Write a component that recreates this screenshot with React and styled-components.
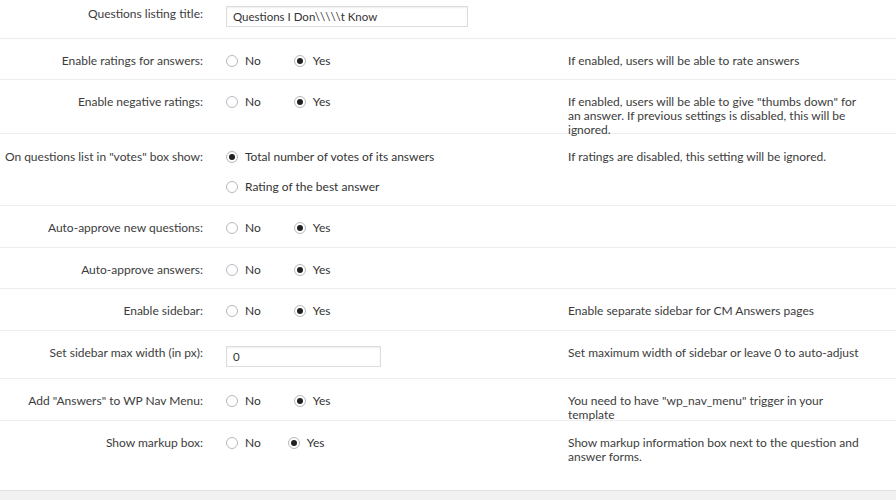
import React from "react";
import styled, { createGlobalStyle } from "styled-components";

const Global = createGlobalStyle`
  body { margin: 0; background: #fff; font-family: Lato, "Noto Sans", sans-serif; color: #444; }
`;
const Page = styled.div`width: 896px; height: 500px; overflow: hidden; display: flex; flex-direction: column;`;
const Row = styled.div`
  display: grid; grid-template-columns: 203px 365px 1fr;
  height: ${p => p.h}px; box-sizing: border-box; padding-top: ${p => p.pt ?? 15}px;
  border-bottom: ${p => (p.last ? "none" : "1px solid #ececec")};
  font-size: 12px; line-height: 14px;
`;
const Label = styled.div`text-align: right; color: #3c3c3c; padding-top: ${p => p.off || 0}px;`;
const Control = styled.div`padding-left: 23px; display: flex; flex-direction: column; gap: 16px;`;
const Desc = styled.div`color: #3c3c3c; padding-right: 30px;`;
const Options = styled.div`display: flex; align-items: center; gap: ${p => p.gap || 33}px;`;
const Opt = styled.label`display: flex; align-items: center; gap: 7px; color: #333;`;
const Circle = styled.span`
  width: 12px; height: 12px; border-radius: 50%; border: 1px solid #b4b9be; box-sizing: border-box;
  display: inline-flex; align-items: center; justify-content: center; background: #fff;
  &::after { content: ""; width: 6px; height: 6px; border-radius: 50%; background: ${p => (p.on ? "#222" : "transparent")}; }
`;
const Input = styled.div`
  width: ${p => p.w}px; height: 21px; box-sizing: border-box; border: 1px solid #ddd;
  box-shadow: inset 0 1px 2px rgba(0,0,0,.07); padding: 3px 6px; font-size: 11.5px; color: #333;
`;
const Footer = styled.div`flex: 1; background: #f1f1f1; border-top: 1px solid #e0e0e0;`;

const YesNo = ({ gap }) => (
  <Options gap={gap}>
    <Opt><Circle />No</Opt>
    <Opt><Circle on />Yes</Opt>
  </Options>
);

export default function App() {
  return (
    <Page>
      <Global />
      <Row h={39} pt={6}>
        <Label off={1}>Questions listing title:</Label>
        <Control><Input w={242}>Questions I Don\\\\\t Know</Input></Control>
        <Desc />
      </Row>
      <Row h={41}><Label>Enable ratings for answers:</Label><Control><YesNo /></Control><Desc>If enabled, users will be able to rate answers</Desc></Row>
      <Row h={54}><Label>Enable negative ratings:</Label><Control><YesNo /></Control><Desc>If enabled, users will be able to give "thumbs down" for an answer. If previous settings is disabled, this will be ignored.</Desc></Row>
      <Row h={72} pt={16}>
        <Label>On questions list in "votes" box show:</Label>
        <Control>
          <Opt><Circle on />Total number of votes of its answers</Opt>
          <Opt><Circle />Rating of the best answer</Opt>
        </Control>
        <Desc>If ratings are disabled, this setting will be ignored.</Desc>
      </Row>
      <Row h={42}><Label>Auto-approve new questions:</Label><Control><YesNo /></Control><Desc /></Row>
      <Row h={41}><Label>Auto-approve answers:</Label><Control><YesNo /></Control><Desc /></Row>
      <Row h={42}><Label>Enable sidebar:</Label><Control><YesNo /></Control><Desc>Enable separate sidebar for CM Answers pages</Desc></Row>
      <Row h={48}>
        <Label>Set sidebar max width (in px):</Label>
        <Control><Input w={155}>0</Input></Control>
        <Desc>Set maximum width of sidebar or leave 0 to auto-adjust</Desc>
      </Row>
      <Row h={42}><Label>Add "Answers" to WP Nav Menu:</Label><Control><YesNo /></Control><Desc>You need to have "wp_nav_menu" trigger in your template</Desc></Row>
      <Row h={69} last><Label>Show markup box:</Label><Control><YesNo gap={27} /></Control><Desc>Show markup information box next to the question and answer forms.</Desc></Row>
      <Footer />
    </Page>
  );
}
